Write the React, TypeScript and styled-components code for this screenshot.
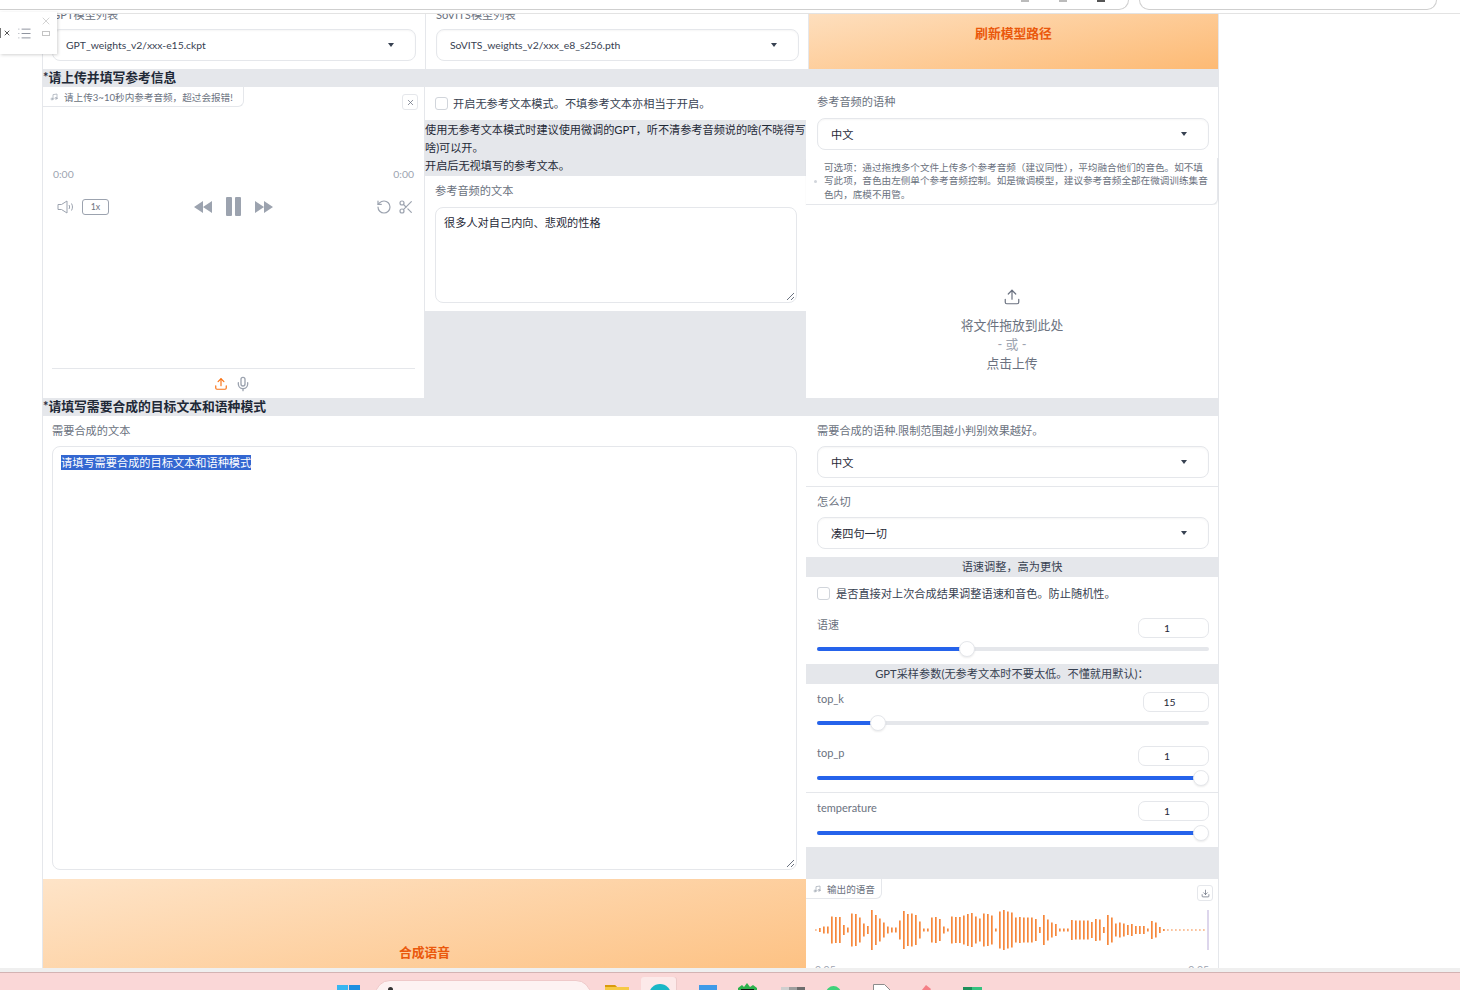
import React from "react";
import styled, { createGlobalStyle } from "styled-components";
import { X, List, RotateCcw, Scissors, Music, Upload, Mic, Download } from "lucide-react";

const Global = createGlobalStyle`
  html, body { margin: 0; padding: 0; background: #fff; overflow: hidden; }
  body { font-family: "Lato", "Noto Sans CJK SC", sans-serif; font-size: 11.2px; color: #1f2937; }
  * { box-sizing: border-box; }
`;

const GRAY = "#e5e7eb";

const Shell = styled.div`
  position: relative;
  width: 1460px;
  height: 990px;
  display: flex;
  flex-direction: column;
  overflow: hidden;
`;

const TopStrip = styled.div`
  height: 14px;
  flex: none;
  display: flex;
  border-bottom: 1px solid #e3e3e3;
  background: #fff;
`;

const Tab = styled.div<{ $w: number; $ml?: number }>`
  width: ${(p) => p.$w}px;
  margin-left: ${(p) => p.$ml ?? 0}px;
  height: 10px;
  display: flex;
  justify-content: flex-end;
  gap: 30px;
  padding-right: 23px;
  border: 1px solid #cfcfcf;
  border-top: none;
  border-left-width: ${(p) => (p.$ml ? 1 : 0)}px;
  border-radius: ${(p) => (p.$ml ? "0 0 12px 12px" : "0 0 12px 0")};
`;

const TabMark = styled.i<{ $dark?: boolean }>`
  display: block;
  width: 8px;
  height: 2px;
  background: ${(p) => (p.$dark ? "#555" : "#bbb")};
`;

const Main = styled.main`
  height: 954px;
  flex: none;
  overflow: hidden;
  padding-left: 42px;
`;

const Page = styled.div`
  width: 1177px;
  margin-top: -18px;
  border-left: 1px solid ${GRAY};
  border-right: 1px solid ${GRAY};
  background: ${GRAY};
`;

const Row = styled.div<{ $cols: string }>`
  display: grid;
  grid-template-columns: ${(p) => p.$cols};
  background: ${GRAY};
`;

const Cell = styled.div`
  background: #fff;
  position: relative;
`;

const ModelCell = styled(Cell)<{ $pl: number; $pr: number }>`
  height: 73px;
  padding: 10px ${(p) => p.$pr}px 0 ${(p) => p.$pl}px;
  border-right: 1px solid ${GRAY};
`;

const Label = styled.div<{ $mb?: number }>`
  line-height: 18px;
  margin-bottom: ${(p) => p.$mb ?? 6}px;
  color: #6b7280;
  font-size: 11.2px;
  white-space: nowrap;
`;

const Select = styled.div`
  height: 32px;
  display: flex;
  align-items: center;
  justify-content: space-between;
  padding: 0 21px 0 13px;
  border: 1px solid ${GRAY};
  border-radius: 8px;
  background: #fff;
  box-shadow: inset 0 1px 2px rgba(0, 0, 0, 0.04);
  color: #1f2937;
  font-size: 11.2px;
`;

const ModelName = styled.span`
  font-size: 10.4px;
  margin-top: -1px;
  color: #374151;
`;

const Caret = styled.i`
  display: block;
  width: 0;
  height: 0;
  border-left: 3.5px solid transparent;
  border-right: 3.5px solid transparent;
  border-top: 4px solid #374151;
`;

const GradientButton = styled.div<{ $h: number }>`
  height: ${(p) => p.$h}px;
  display: flex;
  align-items: center;
  justify-content: center;
  background: linear-gradient(to bottom right, #fee4c8, #fdba74);
  color: #ea580c;
  font-size: 12.8px;
  font-weight: 600;
`;

const SectionTitle = styled.div`
  height: 18px;
  line-height: 17px;
  background: ${GRAY};
  color: #1f2937;
  font-size: 12.8px;
  font-weight: 700;
  white-space: nowrap;
`;

const AudioCell = styled(Cell)`
  height: 311px;
  padding: 78px 9px 0 9px;
`;

const Badge = styled.div<{ $w: number }>`
  position: absolute;
  top: 0;
  left: 0;
  width: ${(p) => p.$w}px;
  height: 20px;
  display: flex;
  align-items: center;
  gap: 6px;
  padding-left: 7px;
  color: #6b7280;
  font-size: 9.6px;
  background: #fff;
  border-right: 1px solid ${GRAY};
  border-bottom: 1px solid ${GRAY};
  border-bottom-right-radius: 6px;
  white-space: nowrap;
  svg { color: #9ca3af; flex: none; }
`;

const CornerButton = styled.div<{ $top: number; $right: number }>`
  position: absolute;
  top: ${(p) => p.$top}px;
  right: ${(p) => p.$right}px;
  width: 16px;
  height: 16px;
  display: flex;
  align-items: center;
  justify-content: center;
  border: 1px solid ${GRAY};
  border-radius: 3px;
  color: #6b7280;
  background: #fff;
`;

const TimeRow = styled.div`
  display: flex;
  justify-content: space-between;
  height: 18px;
  padding: 0 1px;
  line-height: 18px;
  color: #9ca3af;
  font-size: 10.4px;
`;

const Controls = styled.div`
  display: grid;
  grid-template-columns: 1fr auto 1fr;
  align-items: center;
  height: 18px;
  margin-top: 14px;
  padding: 0 5px 0 5px;
`;

const ControlGroup = styled.div<{ $end?: boolean; $gap: number }>`
  display: flex;
  align-items: center;
  gap: ${(p) => p.$gap}px;
  justify-content: ${(p) => (p.$end ? "flex-end" : "flex-start")};
  margin-right: ${(p) => (p.$end ? -4 : 0)}px;
  color: #9ca3af;
`;

const Rate = styled.div`
  width: 27px;
  height: 16px;
  display: flex;
  align-items: center;
  justify-content: center;
  border: 1px solid #9ca3af;
  border-radius: 3px;
  color: #6b7280;
  font-size: 8.8px;
`;

const Divider = styled.div`
  height: 1px;
  margin-top: 153px;
  background: ${GRAY};
`;

const SourceRow = styled.div`
  height: 30px;
  display: flex;
  align-items: center;
  justify-content: center;
  gap: 7px;
  padding-right: 2px;
`;

const MiddleColumn = styled.div`
  display: flex;
  flex-direction: column;
  background: ${GRAY};
  border-left: 1px solid ${GRAY};
`;

const CheckRow = styled.div<{ $h: number; $pt: number; $pl: number; $gap: number }>`
  height: ${(p) => p.$h}px;
  padding: ${(p) => p.$pt}px 0 0 ${(p) => p.$pl}px;
  display: flex;
  align-items: flex-start;
  gap: ${(p) => p.$gap}px;
  background: #fff;
  color: #374151;
  line-height: 13px;
  white-space: nowrap;
`;

const Checkbox = styled.span`
  width: 13px;
  height: 13px;
  flex: none;
  border: 1px solid #d1d5db;
  border-radius: 3px;
  background: #fff;
`;

const Note = styled.div`
  height: 56px;
  padding-top: 1px;
  line-height: 18px;
  letter-spacing: -0.05px;
  white-space: nowrap;
  color: #1f2937;
  background: ${GRAY};
`;

const TextBlock = styled.div`
  height: 135px;
  padding: 6px 9px 0 10px;
  background: #fff;
`;

const TextArea = styled.div<{ $h: number; $pt: number }>`
  position: relative;
  height: ${(p) => p.$h}px;
  padding: ${(p) => p.$pt}px 8px;
  border: 1px solid ${GRAY};
  border-radius: 8px;
  background: #fff;
  color: #1f2937;
  line-height: 17px;
`;

const Grip = styled.svg`
  position: absolute;
  right: 1px;
  bottom: 1px;
`;

const Selected = styled.span`
  background: #3367d1;
  color: #fff;
  padding: 1px 0;
`;

const RightColumn = styled.div`
  display: flex;
  flex-direction: column;
  background: #fff;
`;

const PadBlock = styled.div<{ $pt: number; $pb: number; $pl?: number; $line?: boolean }>`
  padding: ${(p) => p.$pt}px 9px ${(p) => p.$pb}px ${(p) => p.$pl ?? 11}px;
  background: #fff;
  border-bottom: ${(p) => (p.$line ? `1px solid ${GRAY}` : "none")};
`;

const HelpPanel = styled.div`
  display: flex;
  align-items: center;
  gap: 7px;
  height: 47px;
  margin-top: 8px;
  padding: 0 7px 0 8px;
  background: #fff;
  color: #6b7280;
  font-size: 9.6px;
  line-height: 13.4px;
  white-space: nowrap;
  border-bottom: 1px solid ${GRAY};
  border-right: 1px solid ${GRAY};
  border-bottom-right-radius: 6px;
  box-shadow: 0 1px 2px rgba(0, 0, 0, 0.05);
`;

const HelpDot = styled.i`
  width: 3px;
  height: 3px;
  flex: none;
  border-radius: 50%;
  background: #d1d5db;
`;

const Drop = styled.div`
  flex: 1;
  padding-top: 83px;
  display: flex;
  flex-direction: column;
  align-items: center;
  color: #6b7280;
  font-size: 12.8px;
  line-height: 19px;
  background: #fff;
  svg { margin-bottom: 10px; }
`;

const Or = styled.div`
  color: #9ca3af;
`;

const BandTitle = styled.div`
  height: 20px;
  line-height: 20px;
  text-align: center;
  background: ${GRAY};
  color: #374151;
`;

const SliderBlock = styled.div<{ $pt: number; $pb: number; $line?: boolean }>`
  padding: ${(p) => p.$pt}px 9px ${(p) => p.$pb}px 11px;
  background: #fff;
  border-bottom: ${(p) => (p.$line ? `1px solid ${GRAY}` : "none")};
`;

const SliderHead = styled.div<{ $h: number }>`
  height: ${(p) => p.$h}px;
  display: flex;
  justify-content: space-between;
  align-items: flex-start;
`;

const SliderName = styled.div`
  color: #6b7280;
  line-height: 14px;
  font-size: 11px;
`;

const NumberBox = styled.div<{ $w: number }>`
  width: ${(p) => p.$w}px;
  height: 20px;
  line-height: 19px;
  padding-right: 13px;
  text-align: center;
  border: 1px solid ${GRAY};
  border-radius: 7px;
  color: #1f2937;
  font-size: 10.4px;
`;

const Track = styled.div`
  position: relative;
  height: 4px;
  margin: 8px 0;
  border-radius: 2px;
  background: ${GRAY};
`;

const Fill = styled.div`
  height: 100%;
  border-radius: 2px;
  background: #2563eb;
`;

const Thumb = styled.div`
  position: absolute;
  top: -6px;
  width: 16px;
  height: 16px;
  margin-left: -8px;
  border: 1px solid ${GRAY};
  border-radius: 50%;
  background: #fff;
  box-shadow: 0 1px 2px rgba(0, 0, 0, 0.08);
`;

const OutputCell = styled(Cell)`
  height: 146px;
  padding: 31px 9px 0 9px;
`;

const OutputTimes = styled(TimeRow)`
  margin-top: 8px;
  padding: 0;
`;

const GapBand = styled.div`
  height: 32px;
  background: ${GRAY};
`;

const Overlay = styled.div`
  position: absolute;
  left: 0;
  top: 12px;
  width: 57px;
  height: 42px;
  background: #fff;
  box-shadow: 1px 1px 3px rgba(0, 0, 0, 0.18);
  color: #6b7280;
`;

const OverlayIcon = styled.span<{ $l: number; $t: number }>`
  position: absolute;
  left: ${(p) => p.$l}px;
  top: ${(p) => p.$t}px;
  display: flex;
`;

const OverlayBar = styled.i`
  display: block;
  width: 1px;
  height: 10px;
  background: #777;
`;

const Restore = styled.i`
  display: block;
  width: 8px;
  height: 5px;
  border: 1px solid #c4c4c4;
`;

const BottomEdge = styled.div`
  height: 5px;
  flex: none;
  background: #efefef;
  border-bottom: 1px solid #d3b3b3;
`;

const Taskbar = styled.div`
  flex: 1;
  overflow: hidden;
  display: flex;
  padding-left: 337px;
  background: #fad7d7;
`;

const TaskIcon = styled.svg<{ $ml: number; $mt: number }>`
  flex: none;
  margin-left: ${(p) => p.$ml}px;
  margin-top: ${(p) => p.$mt}px;
`;

const SearchPill = styled.div`
  flex: none;
  width: 216px;
  height: 30px;
  margin: 7px 0 0 15px;
  padding: 6px 0 0 12px;
  border: 1px solid #efc9c9;
  border-radius: 15px;
  background: #fdf2f2;
`;

const SearchDot = styled.i`
  display: block;
  width: 5px;
  height: 5px;
  border-radius: 50%;
  background: #333;
`;

const ActiveTile = styled.div`
  flex: none;
  width: 35px;
  height: 24px;
  margin: 4px 0 0 12px;
  padding: 7px 0 0 8px;
  border-radius: 3px;
  background: #fce9e9;
  box-shadow: 1px 0 0 #eccaca;
`;

function Speaker() {
  return (
    <svg width="17" height="14" viewBox="0 0 17 14" fill="none" stroke="currentColor" strokeWidth="1">
      <path d="M1 4.5h3.5L10 1v12L4.5 9.5H1z" />
      <path d="M12 5c.8 1.2.8 2.8 0 4M14.5 3.5c1.3 2.2 1.3 4.800 0 7" />
    </svg>
  );
}

function Rewind() {
  return (
    <svg width="18" height="12" viewBox="0 0 18 12" fill="currentColor">
      <path d="M0 6l9-6v12zM9 6l9-6v12z" />
    </svg>
  );
}

function Forward() {
  return (
    <svg width="18" height="12" viewBox="0 0 18 12" fill="currentColor">
      <path d="M18 6L9 0v12zM9 6L0 0v12z" />
    </svg>
  );
}

function Pause() {
  return (
    <svg width="15" height="19" viewBox="0 0 15 19" fill="currentColor">
      <rect x="0" y="0" width="6" height="19" rx="1" />
      <rect x="9" y="0" width="6" height="19" rx="1" />
    </svg>
  );
}

function ResizeGrip() {
  return (
    <Grip width="9" height="9" viewBox="0 0 9 9" stroke="#6b7280" strokeWidth="1">
      <path d="M1 8l7-7M5 8l3-3" />
    </Grip>
  );
}

const BARS = [
  1, 4, 7, 7, 27, 26, 26, 10, 5, 33, 32, 25, 13, 8, 40, 30, 23, 15, 7, 5, 5, 19, 38, 32, 33, 30, 17, 3, 3, 25, 26, 22, 7, 3,
  27, 26, 26, 29, 32, 34, 27, 23, 33, 32, 29, 3, 37, 40, 37, 35, 25, 26, 25, 25, 25, 22, 6, 30, 21, 15, 12, 3, 3, 3, 20, 19,
  19, 19, 19, 16, 22, 21, 6, 30, 25, 13, 15, 13, 10, 12, 8, 8, 8, 3, 18, 15, 6, 2, 1, 1, 1, 1, 1, 1, 1, 1, 1, 1, 1,
];

function Waveform() {
  return (
    <svg width="395" height="40" viewBox="0 0 395 40">
      {BARS.map((h, i) => (
        <rect key={i} x={i * 4} y={20 - h / 2} width="1.7" height={h} fill="#f6883c" />
      ))}
      <rect x="392" y="0" width="2" height="40" fill="#ddd6ec" />
    </svg>
  );
}

function Slider({ pct, value, name, w, head, pt, pb, line }: { pct: number; value: string; name: string; w: number; head: number; pt: number; pb: number; line?: boolean }) {
  return (
    <SliderBlock $pt={pt} $pb={pb} $line={line}>
      <SliderHead $h={head}>
        <SliderName>{name}</SliderName>
        <NumberBox $w={w}>{value}</NumberBox>
      </SliderHead>
      <Track>
        <Fill style={{ width: `${pct}%` }} />
        <Thumb style={{ left: `${pct}%` }} />
      </Track>
    </SliderBlock>
  );
}

export default function App() {
  return (
    <Shell>
      <Global />
      <TopStrip>
        <Tab $w={1129}>
          <TabMark />
          <TabMark />
          <TabMark $dark />
        </Tab>
        <Tab $w={298} $ml={10} />
      </TopStrip>
      <Main>
        <Page>
          <Row $cols="383px 383px 409px">
            <ModelCell $pl={9} $pr={9}>
              <Label $mb={5}>GPT模型列表</Label>
              <Select>
                <ModelName>GPT_weights_v2/xxx-e15.ckpt</ModelName>
                <Caret />
              </Select>
            </ModelCell>
            <ModelCell $pl={10} $pr={9}>
              <Label $mb={5}>SoVITS模型列表</Label>
              <Select>
                <ModelName>SoVITS_weights_v2/xxx_e8_s256.pth</ModelName>
                <Caret />
              </Select>
            </ModelCell>
            <GradientButton $h={73}>刷新模型路径</GradientButton>
          </Row>
          <SectionTitle>*请上传并填写参考信息</SectionTitle>
          <Row $cols="381px 382px 412px">
            <AudioCell>
              <Badge $w={201}>
                <Music size={8} />
                请上传3~10秒内参考音频，超过会报错!
              </Badge>
              <CornerButton $top={7} $right={6}>
                <X size={9} />
              </CornerButton>
              <TimeRow>
                <span>0:00</span>
                <span>0:00</span>
              </TimeRow>
              <Controls>
                <ControlGroup $gap={8}>
                  <Speaker />
                  <Rate>1x</Rate>
                </ControlGroup>
                <ControlGroup $gap={14}>
                  <Rewind />
                  <Pause />
                  <Forward />
                </ControlGroup>
                <ControlGroup $end $gap={6}>
                  <RotateCcw size={16} strokeWidth={1.8} />
                  <Scissors size={16} strokeWidth={1.8} />
                </ControlGroup>
              </Controls>
              <Divider />
              <SourceRow>
                <Upload size={14} color="#f97316" />
                <Mic size={16} color="#9ca3af" />
              </SourceRow>
            </AudioCell>
            <MiddleColumn>
              <CheckRow $h={33} $pt={10} $pl={10} $gap={5}>
                <Checkbox />
                开启无参考文本模式。不填参考文本亦相当于开启。
              </CheckRow>
              <Note>
                使用无参考文本模式时建议使用微调的GPT，听不清参考音频说的啥(不晓得写
                <br />
                啥)可以开。
                <br />
                开启后无视填写的参考文本。
              </Note>
              <TextBlock>
                <Label $mb={7}>参考音频的文本</Label>
                <TextArea $h={96} $pt={6}>
                  很多人对自己内向、悲观的性格
                  <ResizeGrip />
                </TextArea>
              </TextBlock>
            </MiddleColumn>
            <RightColumn>
              <PadBlock $pt={6} $pb={0}>
                <Label $mb={7}>参考音频的语种</Label>
                <Select>
                  <span>中文</span>
                  <Caret />
                </Select>
              </PadBlock>
              <HelpPanel>
                <HelpDot />
                <div>
                  可选项：通过拖拽多个文件上传多个参考音频（建议同性），平均融合他们的音色。如不填
                  <br />
                  写此项，音色由左侧单个参考音频控制。如是微调模型，建议参考音频全部在微调训练集音
                  <br />
                  色内，底模不用管。
                </div>
              </HelpPanel>
              <Drop>
                <Upload size={18} color="#6b7280" strokeWidth={1.6} />
                <div>将文件拖放到此处</div>
                <Or>- 或 -</Or>
                <div>点击上传</div>
              </Drop>
            </RightColumn>
          </Row>
          <SectionTitle>*请填写需要合成的目标文本和语种模式</SectionTitle>
          <Row $cols="763px 412px">
            <div>
              <Cell>
                <PadBlock $pt={6} $pb={9} $pl={9}>
                  <Label>需要合成的文本</Label>
                  <TextArea $h={424} $pt={7}>
                    <Selected>请填写需要合成的目标文本和语种模式</Selected>
                    <ResizeGrip />
                  </TextArea>
                </PadBlock>
              </Cell>
              <GradientButton $h={144}>合成语音</GradientButton>
            </div>
            <RightColumn>
              <PadBlock $pt={6} $pb={8} $line>
                <Label>需要合成的语种.限制范围越小判别效果越好。</Label>
                <Select>
                  <span>中文</span>
                  <Caret />
                </Select>
              </PadBlock>
              <PadBlock $pt={6} $pb={8}>
                <Label>怎么切</Label>
                <Select>
                  <span>凑四句一切</span>
                  <Caret />
                </Select>
              </PadBlock>
              <BandTitle>语速调整，高为更快</BandTitle>
              <CheckRow $h={41} $pt={10} $pl={11} $gap={6}>
                <Checkbox />
                是否直接对上次合成结果调整语速和音色。防止随机性。
              </CheckRow>
              <Slider name="语速" value="1" w={71} pct={38.3} head={21} pt={0} pb={5} />
              <BandTitle>GPT采样参数(无参考文本时不要太低。不懂就用默认)：</BandTitle>
              <Slider name="top_k" value="15" w={66} pct={15.5} head={21} pt={8} pb={13} />
              <Slider name="top_p" value="1" w={71} pct={98} head={22} pt={0} pb={4} line />
              <Slider name="temperature" value="1" w={71} pct={98} head={22} pt={8} pb={4} />
              <GapBand />
              <OutputCell>
                <Badge $w={76}>
                  <Music size={8} />
                  输出的语音
                </Badge>
                <CornerButton $top={6} $right={5}>
                  <Download size={9} />
                </CornerButton>
                <Waveform />
                <OutputTimes>
                  <span>0:05</span>
                  <span>0:05</span>
                </OutputTimes>
              </OutputCell>
            </RightColumn>
          </Row>
        </Page>
      </Main>
      <BottomEdge />
      <Taskbar>
        <TaskIcon $ml={0} $mt={12} width="23" height="23" viewBox="0 0 23 23">
          <rect width="11" height="11" fill="#38b6f1" />
          <rect x="12" width="11" height="11" fill="#1d8fe0" />
        </TaskIcon>
        <SearchPill>
          <SearchDot />
        </SearchPill>
        <TaskIcon $ml={14} $mt={12} width="24" height="20" viewBox="0 0 24 20">
          <path d="M0 0h10l2 2h12v18H0z" fill="#f6c945" />
          <path d="M0 0h10l2 2H0z" fill="#d99a0c" />
        </TaskIcon>
        <ActiveTile>
          <svg width="22" height="22" viewBox="0 0 22 22">
            <circle cx="11" cy="11" r="11" fill="#19b7c6" />
          </svg>
        </ActiveTile>
        <TaskIcon $ml={23} $mt={12} width="18" height="18" viewBox="0 0 18 18">
          <rect width="18" height="18" fill="#3f9ae8" />
        </TaskIcon>
        <TaskIcon $ml={21} $mt={10} width="19" height="18" viewBox="0 0 19 18">
          <path d="M0 5l4-3 2 2 3-4 3 4 3-2 4 3v13H0z" fill="#2bb24c" />
          <rect x="3" y="6" width="13" height="4" fill="#111" />
        </TaskIcon>
        <TaskIcon $ml={24} $mt={14} width="24" height="10" viewBox="0 0 24 10">
          <rect width="8" height="10" fill="#cfcfcf" />
          <rect x="8" width="8" height="10" fill="#9f9f9f" />
          <rect x="16" width="8" height="10" fill="#6d6d6d" />
        </TaskIcon>
        <TaskIcon $ml={21} $mt={13} width="15" height="15" viewBox="0 0 15 15">
          <circle cx="7.500" cy="7.500" r="7.500" fill="#3fd27a" />
        </TaskIcon>
        <TaskIcon $ml={32} $mt={11} width="18" height="18" viewBox="0 0 18 18">
          <path d="M.5.500h11l6 6v11H.5z" fill="#fff" stroke="#8c8c8c" />
        </TaskIcon>
        <TaskIcon $ml={26} $mt={11} width="15" height="15" viewBox="0 0 15 15">
          <path d="M0 12L9 1l5 4-7 10z" fill="#f57f86" />
        </TaskIcon>
        <TaskIcon $ml={31} $mt={14} width="19" height="14" viewBox="0 0 19 14">
          <rect width="9" height="14" fill="#1e8f5b" />
          <rect x="9" width="10" height="14" fill="#35c27f" />
        </TaskIcon>
      </Taskbar>
      <Overlay>
        <OverlayIcon $l={0} $t={16}>
          <OverlayBar />
        </OverlayIcon>
        <OverlayIcon $l={3} $t={17}>
          <X size={8} color="#555" strokeWidth={3} />
        </OverlayIcon>
        <OverlayIcon $l={17} $t={14}>
          <List size={15} color="#6b7280" strokeWidth={1.2} />
        </OverlayIcon>
        <OverlayIcon $l={40} $t={3}>
          <X size={12} color="#c4c4c4" strokeWidth={1.5} />
        </OverlayIcon>
        <OverlayIcon $l={42} $t={19}>
          <Restore />
        </OverlayIcon>
      </Overlay>
    </Shell>
  );
}
